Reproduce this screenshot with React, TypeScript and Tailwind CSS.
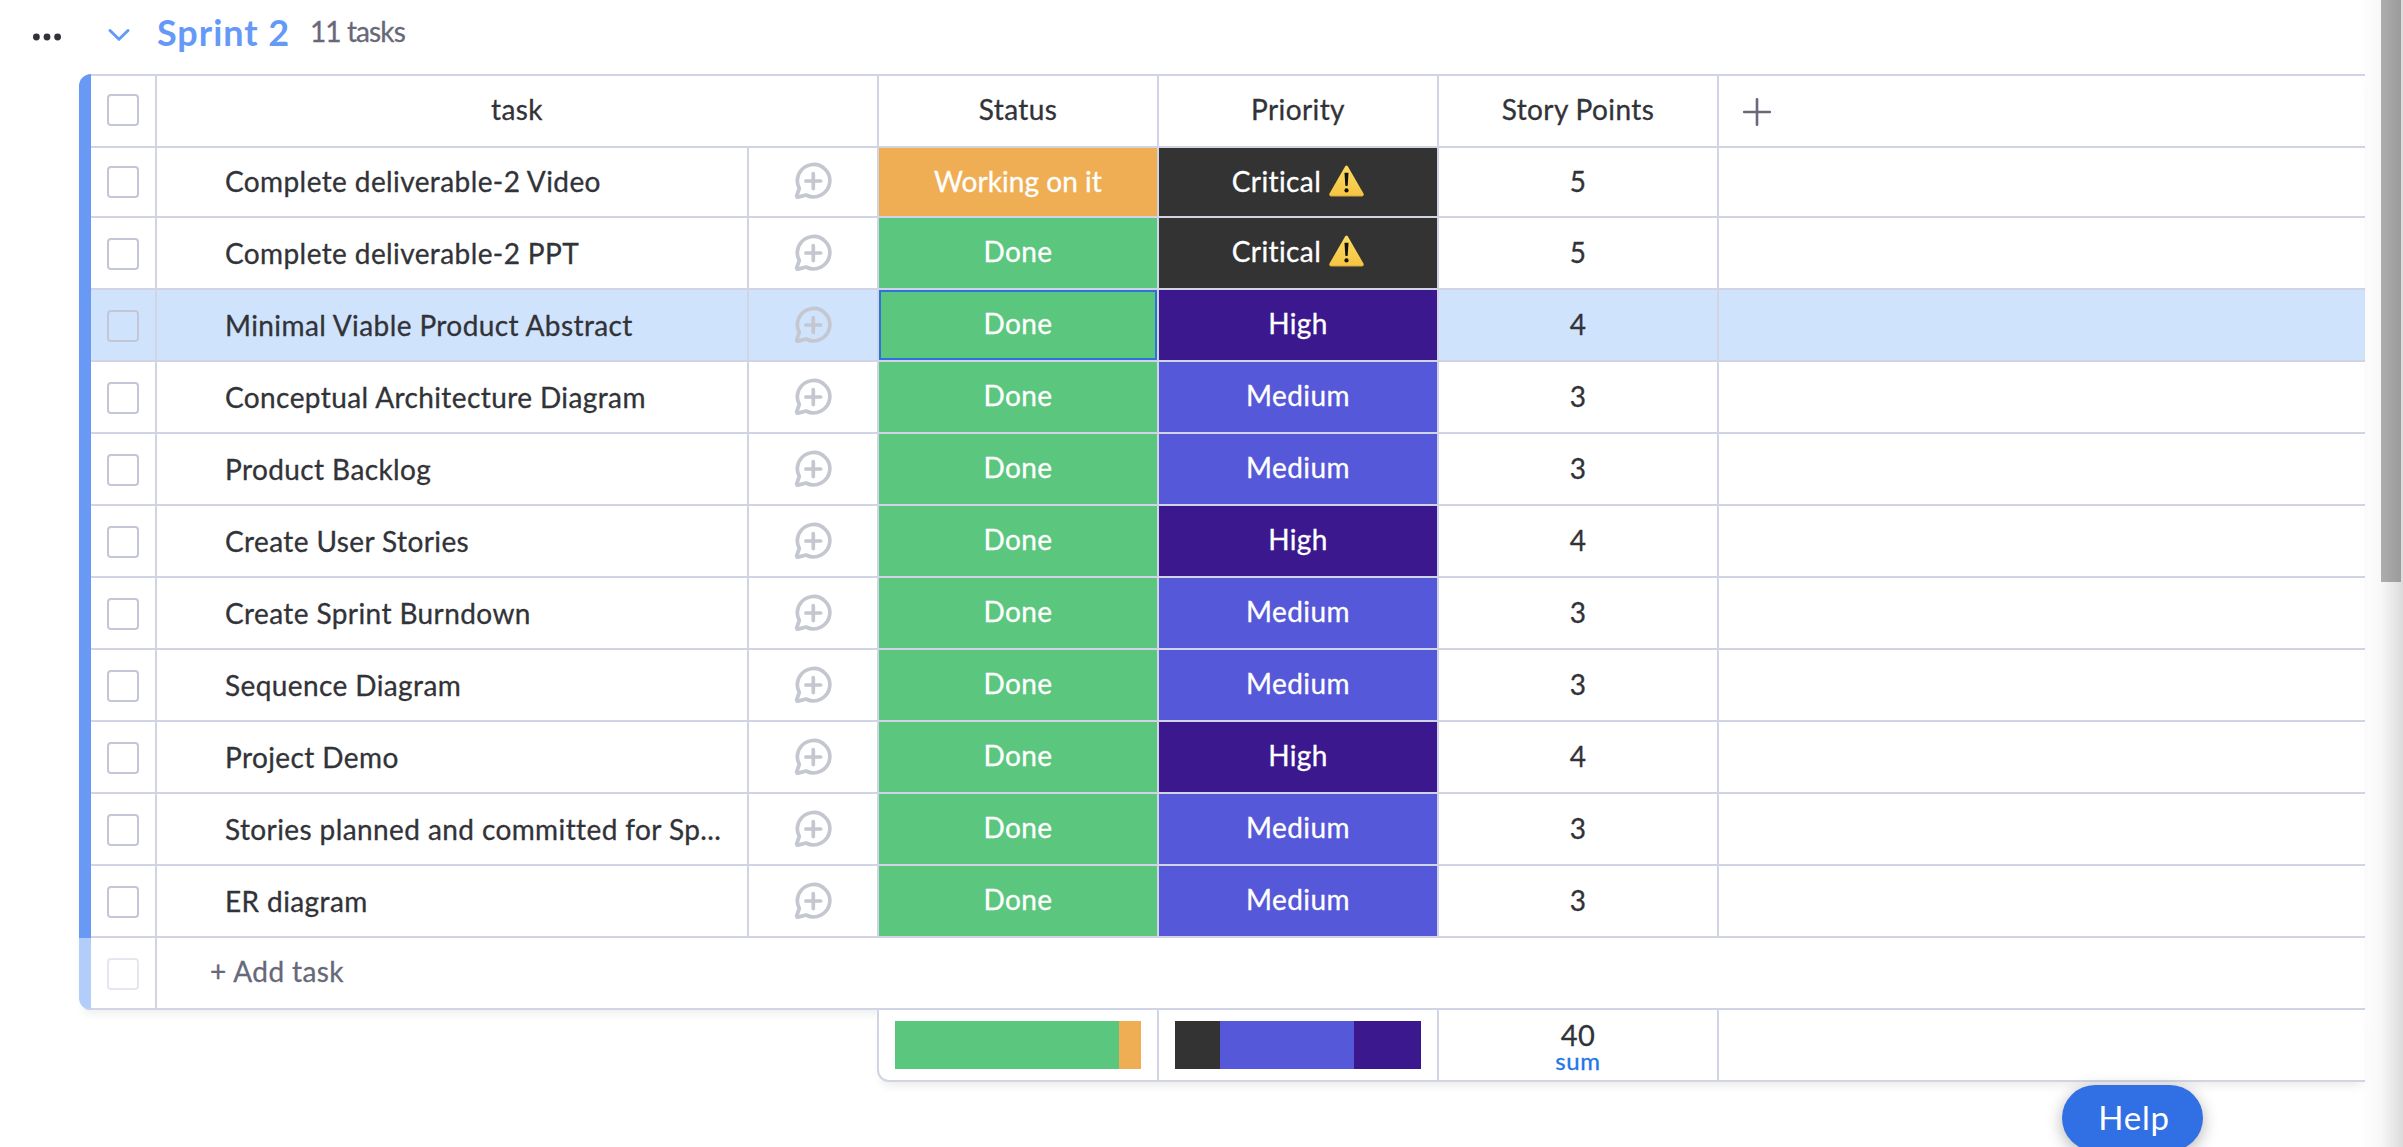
import React from 'react';

type Label = 'Working on it' | 'Done' | 'Critical' | 'High' | 'Medium';

const LABEL_BG: Record<Label, string> = {
  'Working on it': 'bg-[#f0ae54] tracking-[0.05px]',
  Done: 'bg-[#5bc67e]',
  Critical: 'bg-[#333333]',
  High: 'bg-[#3b188d]',
  Medium: 'bg-[#5558d8]',
};

const TASKS: { name: string; status: Label; priority: Label; points: number; selected?: boolean }[] = [
  { name: 'Complete deliverable-2 Video', status: 'Working on it', priority: 'Critical', points: 5 },
  { name: 'Complete deliverable-2 PPT', status: 'Done', priority: 'Critical', points: 5 },
  { name: 'Minimal Viable Product Abstract', status: 'Done', priority: 'High', points: 4, selected: true },
  { name: 'Conceptual Architecture Diagram', status: 'Done', priority: 'Medium', points: 3 },
  { name: 'Product Backlog', status: 'Done', priority: 'Medium', points: 3 },
  { name: 'Create User Stories', status: 'Done', priority: 'High', points: 4 },
  { name: 'Create Sprint Burndown', status: 'Done', priority: 'Medium', points: 3 },
  { name: 'Sequence Diagram', status: 'Done', priority: 'Medium', points: 3 },
  { name: 'Project Demo', status: 'Done', priority: 'High', points: 4 },
  { name: 'Stories planned and committed for Sp...', status: 'Done', priority: 'Medium', points: 3 },
  { name: 'ER diagram', status: 'Done', priority: 'Medium', points: 3 },
];

function Checkbox({ faded }: { faded?: boolean }) {
  return (
    <div
      className={`h-8 w-8 rounded-[4px] border-2 ${faded ? 'border-[#e7e6ee]' : 'border-[#c3c6d6]'}`}
    />
  );
}

function ChatIcon() {
  return (
    <svg className="h-[38px] w-[38px]" viewBox="0 0 38 38" fill="none" stroke="#c4c6d0" strokeWidth="3.7" strokeLinecap="round" strokeLinejoin="round">
      <path d="M5.3 26.3 A16.2 16.2 0 1 1 12 33 L4.1 35.1 Q2.3 35.4 2.8 33.6 Z" />
      <path d="M19.3 11.6 V26.4 M11.9 19 H26.7" />
    </svg>
  );
}

function WarningIcon() {
  return (
    <svg className="h-8 w-[35px]" viewBox="0 0 35 32">
      <defs>
        <linearGradient id="warn" x1="0" y1="0" x2="0" y2="1">
          <stop offset="0" stopColor="#fbdc62" />
          <stop offset="1" stopColor="#f6c443" />
        </linearGradient>
      </defs>
      <path d="M0.3 29.6 Q0.2 31.4 1.9 31.4 H33.1 Q34.8 31.4 34.7 29.6 Z" fill="#d9a83c" />
      <path d="M16.1 1.4 Q17.5 -0.5 18.9 1.4 L34.5 28.6 Q35.2 30.6 33.1 30.6 H1.9 Q-0.2 30.6 0.5 28.6 Z" fill="url(#warn)" />
      <path d="M15.5 7.8 H19.5 L18.7 20.6 Q17.5 21.6 16.3 20.6 Z" fill="#14120c" />
      <circle cx="17.5" cy="25.4" r="2.1" fill="#14120c" />
    </svg>
  );
}

function ColorCell({ label, selected, first }: { label: Label; selected?: boolean; first?: boolean }) {
  return (
    <div className="w-[280px] shrink-0 border-r-2 border-[#d0d4e4]">
      <div
        className={`flex h-full items-center justify-center text-white ${LABEL_BG[label]} ${first ? 'pb-0.5' : 'pb-1'} ${
          selected ? 'border-2 border-[#2f70e0]' : ''
        }`}
      >
        <span>{label}</span>
        {label === 'Critical' && (
          <span className="ml-2">
            <WarningIcon />
          </span>
        )}
      </div>
    </div>
  );
}

function HeaderCell({ children }: { children: React.ReactNode }) {
  return (
    <div className="flex w-[280px] shrink-0 items-center justify-center border-r-2 border-[#d0d4e4] pb-1">
      {children}
    </div>
  );
}

export default function App() {
  return (
    <div className="relative h-[1147px] w-[2403px] overflow-hidden bg-white font-['Lato','Liberation_Sans',sans-serif] text-[28px] leading-[34px] tracking-[0.4px] text-[#323338] [-webkit-text-stroke:0.3px]">
      {/* Group header */}
      <header className="flex h-[74px] items-start">
        <svg className="mt-[31px] ml-8 h-3 w-[30px]" viewBox="0 0 30 12" fill="#323338">
          <circle cx="4.4" cy="6" r="3.4" />
          <circle cx="15" cy="6" r="3.4" />
          <circle cx="25.6" cy="6" r="3.4" />
        </svg>
        <svg className="mt-[27px] ml-[45px] h-4 w-6" viewBox="0 0 24 16" fill="none" stroke="#6599f8" strokeWidth="3" strokeLinecap="round" strokeLinejoin="round">
          <path d="M3 3.5 L12 12.3 L21 3.5" />
        </svg>
        <h1 className="mt-[10px] ml-[26px] w-[133px] text-[36px] leading-[44px] font-bold tracking-[0.95px] whitespace-nowrap text-[#6599f8] [-webkit-text-stroke:0px]">
          Sprint 2
        </h1>
        <span className="mt-[14px] ml-[20px] tracking-[-0.9px] text-[#676879]">11 tasks</span>
      </header>

      {/* Board */}
      <main className="ml-[79px] w-[2286px]">
        <div className="flex rounded-bl-[12px] shadow-[0_8px_10px_-4px_rgba(0,0,0,0.07)]">
          <div className="flex w-3 shrink-0 flex-col overflow-hidden rounded-l-[12px]">
            <div className="h-[864px] bg-[#6899f5]" />
            <div className="h-[72px] border-b-2 border-[#c4cdea] bg-[#b3cdfb]" />
          </div>
          <div className="w-[2274px] border-t-2 border-[#d0d4e4]">
            <div className="flex h-[72px] border-b-2 border-[#d0d4e4]">
              <div className="w-[66px] shrink-0 border-r-2 border-[#d0d4e4] pt-[18px] pl-4">
                <Checkbox />
              </div>
              <div className="flex w-[722px] shrink-0 items-center justify-center border-r-2 border-[#d0d4e4] pb-[5px]">task</div>
              <HeaderCell>Status</HeaderCell>
              <HeaderCell>Priority</HeaderCell>
              <HeaderCell>Story Points</HeaderCell>
              <svg className="mt-[21px] ml-[23px] h-[30px] w-[30px]" viewBox="0 0 30 30" stroke="#676879" strokeWidth="2.6" strokeLinecap="round">
                <path d="M15 2.2 V27.8 M2.2 15 H27.8" />
              </svg>
            </div>

            {TASKS.map((t, i) => (
              <div
                key={t.name}
                className={`flex border-b-2 border-[#d0d4e4] ${i === 0 ? 'h-[70px]' : 'h-[72px] [&_.lead]:pt-0.5'} ${
                  t.selected ? 'bg-[#d0e3fd]' : ''
                }`}
              >
                <div className="lead w-[66px] shrink-0 border-r-2 border-[#d0d4e4] pl-4">
                  <div className="pt-[18px]">
                    <Checkbox />
                  </div>
                </div>
                <div className="lead w-[592px] shrink-0 border-r-2 border-[#d0d4e4] pl-[68px] whitespace-nowrap">
                  <div className="pt-4">{t.name}</div>
                </div>
                <div className="lead w-[130px] shrink-0 border-r-2 border-[#d0d4e4] pl-[45px]">
                  <div className="pt-[14px]">
                    <ChatIcon />
                  </div>
                </div>
                <ColorCell label={t.status} selected={t.selected} first={i === 0} />
                <ColorCell label={t.priority} first={i === 0} />
                <div className="flex w-[280px] shrink-0 items-center justify-center border-r-2 border-[#d0d4e4] pb-0.5">
                  {t.points}
                </div>
              </div>
            ))}

            <div className="flex h-[72px] border-b-2 border-[#d0d4e4]">
              <div className="w-[66px] shrink-0 border-r-2 border-[#d0d4e4] pt-5 pl-4">
                <Checkbox faded />
              </div>
              <div className="pt-4 pl-[53px] text-[#676879]">+ Add task</div>
            </div>
          </div>
        </div>

        {/* Column summaries */}
        <div className="relative ml-[798px] flex h-[72px] rounded-bl-[12px] border-b-2 border-l-2 border-[#d0d4e4] bg-white shadow-[0_8px_10px_-4px_rgba(0,0,0,0.08)]">
          <div className="w-[280px] border-r-2 border-[#d0d4e4] pt-[11px] pl-4">
            <div className="flex h-12 w-[246px]">
              <div className="flex-[10] bg-[#5bc67e]" />
              <div className="flex-1 bg-[#f0ae54]" />
            </div>
          </div>
          <div className="w-[280px] border-r-2 border-[#d0d4e4] pt-[11px] pl-4">
            <div className="flex h-12 w-[246px]">
              <div className="flex-[2] bg-[#333333]" />
              <div className="flex-[6] bg-[#5558d8]" />
              <div className="flex-[3] bg-[#3b188d]" />
            </div>
          </div>
          <div className="flex w-[280px] flex-col items-center border-r-2 border-[#d0d4e4] pt-[10px]">
            <span className="text-[29px] leading-[30px]">40</span>
            <span className="text-[24px] leading-[22px] tracking-[0.6px] text-[#1f76e8]">sum</span>
          </div>
        </div>
      </main>

      {/* Edge shade and scrollbar */}
      <div className="absolute top-0 right-0 h-full w-11 bg-linear-to-r from-transparent via-black/3 to-black/14" />
      <div className="absolute top-0 right-[2px] h-[582px] w-5 bg-linear-to-r from-[#adadad] to-[#9b9b9b]" />

      <button className="absolute top-[1085px] left-[2062px] flex h-[66px] w-[141px] items-center justify-center rounded-full bg-[#3070e4] pb-[3px] pl-[3px] text-[33px] font-normal tracking-[0.8px] text-white shadow-[0_4px_16px_rgba(0,0,0,0.3)] [-webkit-text-stroke:0px]">
        Help
      </button>
    </div>
  );
}
